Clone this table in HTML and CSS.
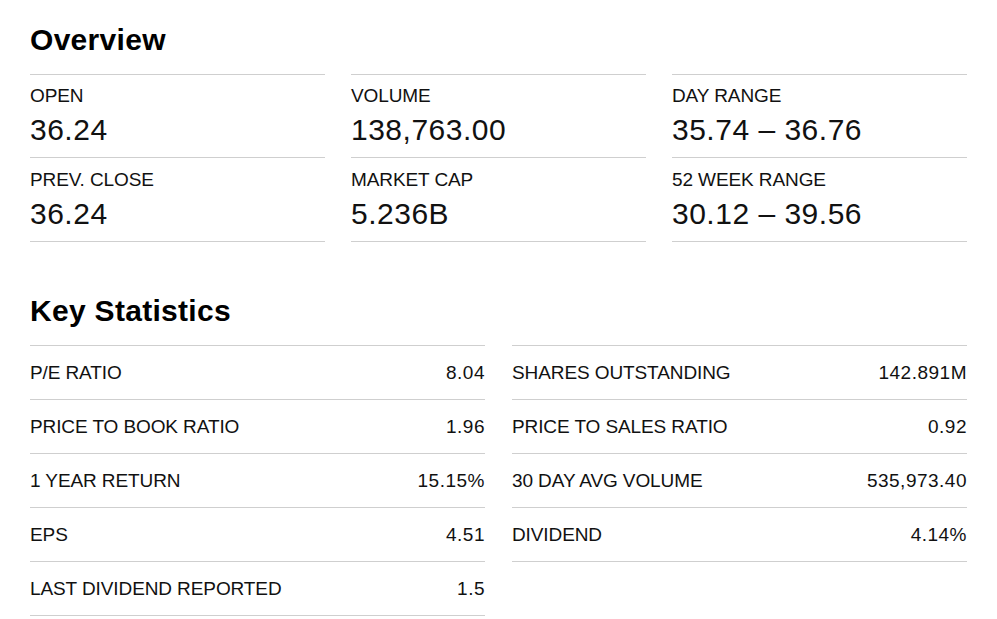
FILE: index.html
```html
<!DOCTYPE html>
<html lang="en">
<head>
<meta charset="utf-8">
<title>Overview</title>
<link rel="stylesheet" href="styles.css">
</head>
<body>
<main class="page">
  <section class="overview">
    <h2 class="title">Overview</h2>
    <div class="ov-grid">
      <div class="ov-cell"><div class="ov-label">OPEN</div><div class="ov-value">36.24</div></div>
      <div class="ov-cell"><div class="ov-label">VOLUME</div><div class="ov-value">138,763.00</div></div>
      <div class="ov-cell"><div class="ov-label">DAY RANGE</div><div class="ov-value">35.74 – 36.76</div></div>
      <div class="ov-cell ov-last"><div class="ov-label">PREV. CLOSE</div><div class="ov-value">36.24</div></div>
      <div class="ov-cell ov-last"><div class="ov-label">MARKET CAP</div><div class="ov-value">5.236B</div></div>
      <div class="ov-cell ov-last"><div class="ov-label">52 WEEK RANGE</div><div class="ov-value">30.12 – 39.56</div></div>
    </div>
  </section>
  <section class="stats">
    <h2 class="title">Key Statistics</h2>
    <div class="st-grid">
      <div class="st-col">
        <div class="st-row"><span class="st-label">P/E RATIO</span><span class="st-value">8.04</span></div>
        <div class="st-row"><span class="st-label">PRICE TO BOOK RATIO</span><span class="st-value">1.96</span></div>
        <div class="st-row"><span class="st-label">1 YEAR RETURN</span><span class="st-value">15.15%</span></div>
        <div class="st-row"><span class="st-label">EPS</span><span class="st-value">4.51</span></div>
        <div class="st-row"><span class="st-label">LAST DIVIDEND REPORTED</span><span class="st-value">1.5</span></div>
      </div>
      <div class="st-col">
        <div class="st-row"><span class="st-label">SHARES OUTSTANDING</span><span class="st-value">142.891M</span></div>
        <div class="st-row"><span class="st-label">PRICE TO SALES RATIO</span><span class="st-value">0.92</span></div>
        <div class="st-row"><span class="st-label">30 DAY AVG VOLUME</span><span class="st-value">535,973.40</span></div>
        <div class="st-row"><span class="st-label">DIVIDEND</span><span class="st-value">4.14%</span></div>
      </div>
    </div>
  </section>
</main>
</body>
</html>
```

FILE: styles.css
```css
html, body {
  margin: 0;
  padding: 0;
  background: #ffffff;
}

body {
  font-family: "Liberation Sans", Arial, sans-serif;
  color: #111111;
}

.page {
  padding: 22px 30px 0 30px;
  display: flex;
  flex-direction: column;
  gap: 51px;
}

.title {
  margin: 0 0 16px 0;
  font-size: 30px;
  line-height: 36px;
  font-weight: 700;
  color: #000000;
  letter-spacing: 0.3px;
}

.ov-grid {
  display: grid;
  grid-template-columns: repeat(3, 1fr);
  column-gap: 26px;
}

.ov-cell {
  border-top: 1px solid #cfcfcf;
  padding: 10px 0 9px 0;
  display: flex;
  flex-direction: column;
  gap: 5px;
}

.ov-last {
  border-bottom: 1px solid #cfcfcf;
  padding-top: 11px;
}

.ov-label {
  font-size: 19px;
  line-height: 22px;
  letter-spacing: -0.1px;
}

.ov-value {
  font-size: 30px;
  line-height: 36px;
  letter-spacing: 0.5px;
}

.st-grid {
  display: grid;
  grid-template-columns: 1fr 1fr;
  column-gap: 27px;
  align-items: start;
}

.st-row {
  border-top: 1px solid #cfcfcf;
  height: 53px;
  display: flex;
  align-items: center;
  justify-content: space-between;
  font-size: 19px;
}

.st-row:last-child {
  border-bottom: 1px solid #cfcfcf;
}

.st-label {
  letter-spacing: -0.1px;
}

.st-value {
  letter-spacing: 0.5px;
}
```
